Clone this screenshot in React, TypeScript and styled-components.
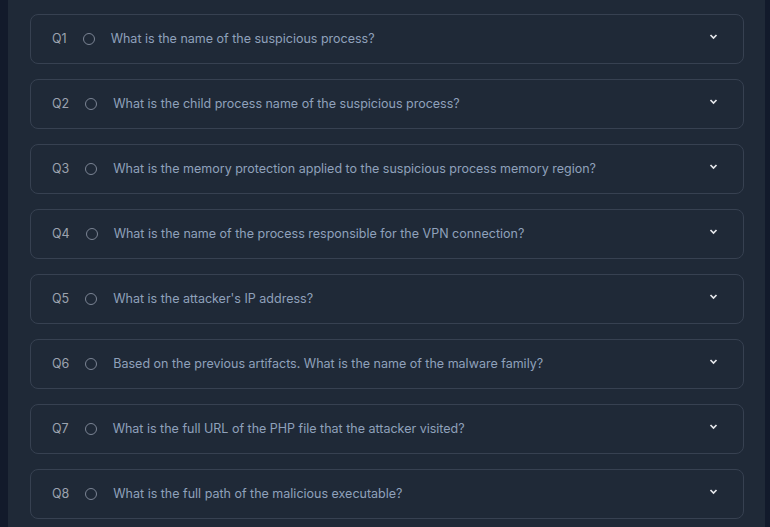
import React from "react";
import styled, { createGlobalStyle } from "styled-components";

const Global = createGlobalStyle`
  html, body { margin: 0; padding: 0; background: #111827; }
  body { font-family: Inter, "Noto Sans", sans-serif; }
`;

const Page = styled.div`
  display: flex;
  height: 527px;
  overflow: hidden;
  background: #121a2b;
`;

const Panel = styled.main`
  margin-left: 8px;
  width: 757px;
  background: #1f2937;
  padding: 14px 21px 0 22px;
  box-sizing: border-box;
  display: flex;
  flex-direction: column;
  gap: 15px;
`;

const Card = styled.div`
  height: 50px;
  box-sizing: border-box;
  border: 1px solid #374151;
  border-radius: 8px;
  background: #1f2937;
  display: flex;
  align-items: center;
  padding: 0 21px 2px 21px;
  flex-shrink: 0;
`;

const Label = styled.span`
  color: #9ca3af;
  font-size: 12.5px;
`;

const Ring = styled.span`
  width: 12px;
  height: 12px;
  box-sizing: border-box;
  border: 1.5px solid #7b8494;
  border-radius: 50%;
  margin: 1px 16px 0 16px;
  flex-shrink: 0;
`;

const Question = styled.span`
  color: #8fa1bb;
  font-size: 12.5px;
  flex: 1;
`;

const ChevronWrap = styled.span`
  display: flex;
  margin: 0 4px 4px 0;
`;

const Chevron = () => (
  <ChevronWrap>
    <svg width="9" height="7" viewBox="0 0 9 7">
      <path d="M1.5 2 L4.5 5 L7.5 2" fill="none" stroke="#e5e7eb" strokeWidth="1.7" />
    </svg>
  </ChevronWrap>
);

const questions = [
  "What is the name of the suspicious process?",
  "What is the child process name of the suspicious process?",
  "What is the memory protection applied to the suspicious process memory region?",
  "What is the name of the process responsible for the VPN connection?",
  "What is the attacker's IP address?",
  "Based on the previous artifacts. What is the name of the malware family?",
  "What is the full URL of the PHP file that the attacker visited?",
  "What is the full path of the malicious executable?",
];

export default function App() {
  return (
    <>
      <Global />
      <Page>
        <Panel>
          {questions.map((q, i) => (
            <Card key={i}>
              <Label>Q{i + 1}</Label>
              <Ring />
              <Question>{q}</Question>
              <Chevron />
            </Card>
          ))}
        </Panel>
      </Page>
    </>
  );
}
